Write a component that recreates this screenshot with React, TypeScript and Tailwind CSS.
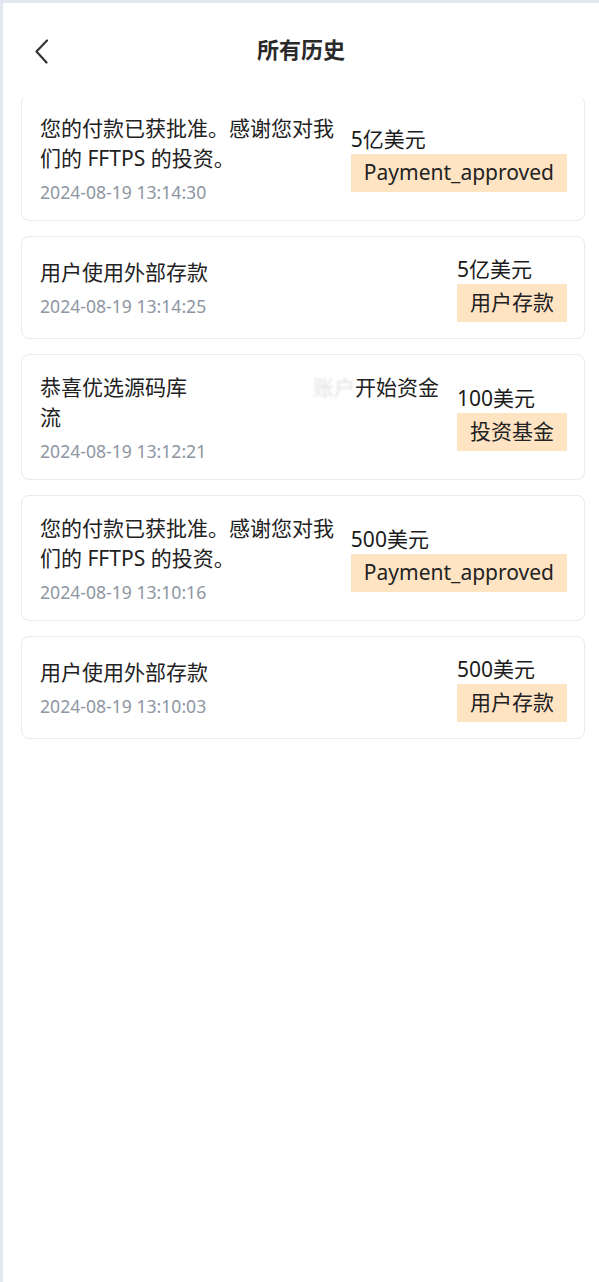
import React from "react";

type Item = {
  text: React.ReactNode;
  time: string;
  amount: string;
  tag: string;
};

const items: Item[] = [
  {
    text: "您的付款已获批准。感谢您对我们的 FFTPS 的投资。",
    time: "2024-08-19 13:14:30",
    amount: "5亿美元",
    tag: "Payment_approved",
  },
  {
    text: "用户使用外部存款",
    time: "2024-08-19 13:14:25",
    amount: "5亿美元",
    tag: "用户存款",
  },
  {
    text: (
      <>
        恭喜优选源码库
        <span className="text-white">已为您的投资</span>
        <span className="text-[#e2e2e2] blur-[1px]">账户</span>
        开始资金流
      </>
    ),
    time: "2024-08-19 13:12:21",
    amount: "100美元",
    tag: "投资基金",
  },
  {
    text: "您的付款已获批准。感谢您对我们的 FFTPS 的投资。",
    time: "2024-08-19 13:10:16",
    amount: "500美元",
    tag: "Payment_approved",
  },
  {
    text: "用户使用外部存款",
    time: "2024-08-19 13:10:03",
    amount: "500美元",
    tag: "用户存款",
  },
];

function HistoryCard({ item }: { item: Item }) {
  return (
    <div className="flex items-center justify-between gap-[10px] rounded-[8px] border border-[#e8eaee] bg-white py-[16.5px] pl-[18px] pr-[17px]">
      {/* description + time */}
      <div className="min-w-0 flex-1">
        <div className="text-[21px] leading-[30px] text-[#222]">{item.text}</div>
        <div className="mt-[7px] text-[17.6px] leading-[24px] text-[#8d96a2]">{item.time}</div>
      </div>
      {/* amount + tag */}
      <div className="flex shrink-0 flex-col items-start">
        <div className="text-[21px] leading-[30px] text-[#1a1a1a]">{item.amount}</div>
        <div className="flex h-[38px] items-center bg-[#ffe4c4] px-[13px] text-[21px] text-[#222]">
          {item.tag}
        </div>
      </div>
    </div>
  );
}

export default function App() {
  return (
    <div
      className="flex h-[1282px] w-full flex-col overflow-hidden border-l-[3px] border-t-[3px] border-[#e3e8f0] bg-white"
      style={{ fontFamily: '"Noto Sans", "Noto Sans CJK SC", sans-serif' }}
    >
      {/* header */}
      <div className="relative flex h-[94px] shrink-0 items-center justify-center pb-[4px]">
        <button className="absolute left-[27px] top-[31px] p-1">
          <svg width="16" height="26" viewBox="0 0 16 26" fill="none">
            <polyline
              points="13,2.5 2.5,13.5 12.5,24.5"
              stroke="#333"
              strokeWidth="2.2"
              strokeLinecap="round"
              strokeLinejoin="round"
            />
          </svg>
        </button>
        <div className="text-[22px] font-bold leading-none text-[#2a2a2a]" style={{ fontFamily: '"Noto Sans CJK SC", sans-serif' }}>
          所有历史
        </div>
      </div>

      {/* list (scrolled slightly) */}
      <div className="flex-1 overflow-hidden pl-[18px] pr-[14px]">
        <div className="-mt-[2px] flex flex-col gap-[15px]">
          {items.map((item, i) => (
            <HistoryCard key={i} item={item} />
          ))}
        </div>
      </div>
    </div>
  );
}
